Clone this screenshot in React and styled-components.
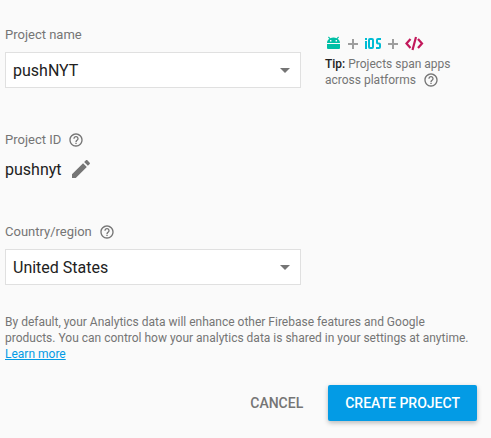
import React, { useState } from "react";
import styled, { createGlobalStyle } from "styled-components";

const GlobalStyle = createGlobalStyle`
  *, *::before, *::after { box-sizing: border-box; }
  body {
    margin: 0;
    background: #fafafa;
    color: #212121;
    font-family: Roboto, "Liberation Sans", sans-serif;
  }
`;

const Form = styled.form`
  display: flex;
  flex-direction: column;
  padding: 25px 14px 16px 5px;
`;

const TopRow = styled.div`
  display: grid;
  grid-template-columns: minmax(0, 296px) minmax(128px, 150px);
  column-gap: 24px;
`;

const Field = styled.div`
  display: flex;
  flex-direction: column;
  gap: 7px;
  max-width: 296px;
  margin-top: ${(p) => p.$space || 0}px;
`;

const LabelRow = styled.div`
  display: flex;
  align-items: center;
  gap: 7px;
  height: 20px;
`;

const Label = styled.label`
  font-size: 13px;
  line-height: 20px;
  color: #757575;
`;

const IconButton = styled.button`
  display: inline-flex;
  padding: 0;
  border: 0;
  background: none;
  color: #757575;
  cursor: pointer;
`;

const Box = styled.div`
  display: flex;
  align-items: center;
  height: 36px;
  border: 1px solid #e0e0e0;
  background: #fff;
  color: #757575;
`;

const NameInput = styled.input`
  flex: 1;
  min-width: 0;
  height: 100%;
  padding: 0 7px;
  border: 0;
  outline: 0;
  background: none;
  font: 16px Roboto, "Liberation Sans", sans-serif;
  color: #212121;
`;

const ArrowButton = styled(IconButton)`
  margin-right: 3px;
`;

const SelectBox = styled(Box)`
  display: grid;
  grid-template-columns: minmax(0, 1fr) 27px;

  select {
    grid-area: 1 / 1 / 2 / 3;
  }
  svg {
    grid-area: 1 / 2 / 2 / 3;
    pointer-events: none;
  }
`;

const RegionSelect = styled.select`
  appearance: none;
  width: 100%;
  height: 34px;
  padding: 0 32px 0 7px;
  border: 0;
  outline: 0;
  background: none;
  font: 16px Roboto, "Liberation Sans", sans-serif;
  color: #212121;
`;

const Tip = styled.aside`
  display: flex;
  flex-direction: column;
  gap: 5px;
  padding-top: 10px;
`;

const Platforms = styled.div`
  display: flex;
  align-items: center;
  height: 16px;
`;

const TipText = styled.p`
  margin: 0;
  font-size: 12px;
  line-height: 16px;
  color: #757575;

  b {
    font-weight: 500;
    color: #212121;
  }
  button {
    margin-left: 4px;
    vertical-align: bottom;
  }
`;

const ProjectId = styled.div`
  display: flex;
  align-items: flex-start;
  gap: 7px;
  height: 24px;
  font-size: 16px;
  line-height: 26px;
`;

const Notice = styled.p`
  margin: 29px 0 0;
  font-size: 12px;
  line-height: 16px;
  color: #757575;
`;

const Link = styled.a`
  color: #039be5;
  text-decoration: underline;
`;

const Actions = styled.div`
  display: flex;
  justify-content: flex-end;
  gap: 8px;
  margin-top: 23px;
`;

const Button = styled.button`
  height: 36px;
  padding: 0 17px;
  border: 0;
  border-radius: 2px;
  background: ${(p) => (p.$primary ? "#039be5" : "transparent")};
  box-shadow: ${(p) => (p.$primary ? "0 2px 5px rgba(0, 0, 0, 0.26)" : "none")};
  color: ${(p) => (p.$primary ? "#fff" : "#757575")};
  font: 500 14px Roboto, "Liberation Sans", sans-serif;
  white-space: nowrap;
  cursor: pointer;
`;

const HelpIcon = () => (
  <svg width="16" height="16" viewBox="0 0 24 24" fill="currentColor" aria-hidden="true">
    <path d="M11 18h2v-2h-2v2zm1-16C6.48 2 2 6.48 2 12s4.48 10 10 10 10-4.48 10-10S17.52 2 12 2zm0 18c-4.41 0-8-3.59-8-8s3.59-8 8-8 8 3.59 8 8-3.59 8-8 8zm0-14c-2.21 0-4 1.79-4 4h2c0-1.1.9-2 2-2s2 .9 2 2c0 2-3 1.75-3 5h2c0-2.25 3-2.5 3-5 0-2.21-1.79-4-4-4z" />
  </svg>
);

const Help = ({ label }) => (
  <IconButton type="button" aria-label={label}>
    <HelpIcon />
  </IconButton>
);

const EditIcon = () => (
  <svg width="24" height="24" viewBox="0 0 24 24" fill="currentColor" aria-hidden="true">
    <path d="M3 17.25V21h3.75L17.81 9.94l-3.75-3.75L3 17.25zM20.71 7.04c.39-.39.39-1.02 0-1.41l-2.34-2.34c-.39-.39-1.02-.39-1.41 0l-1.83 1.83 3.75 3.75 1.83-1.83z" />
  </svg>
);

const ArrowIcon = () => (
  <svg width="24" height="24" viewBox="0 0 24 24" fill="currentColor" aria-hidden="true">
    <path d="M7 10l5 5 5-5z" />
  </svg>
);

const AndroidIcon = () => (
  <svg width="17" height="16" viewBox="0 0 17 16" fill="#00bfa5" aria-hidden="true">
    <path
      fillRule="evenodd"
      d="M2 8C2 6 3 4.6 4.4 3.8L3 2.4l.8-.8 1.6 1.6C6.2 2.8 7.3 2.6 8.5 2.6s2.3.2 3.1.6l1.6-1.6.8.8-1.4 1.4C14 4.6 15 6 15 8zM5 5v1.4h1.4V5zM10.6 5v1.4H12V5z"
    />
    <path d="M2 9h13V13q0 1-1 1H3q-1 0-1-1z" />
  </svg>
);

const PlusIcon = () => (
  <svg width="22" height="16" viewBox="0 0 22 16" stroke="#9e9e9e" strokeWidth="2" aria-hidden="true">
    <path d="M6 9h10M11 4v10" />
  </svg>
);

const IosIcon = () => (
  <svg width="18" height="16" viewBox="0 0 18 16" fill="none" stroke="#00bcd4" strokeWidth="2" role="img" aria-label="iOS">
    <path d="M2 3v2M2 6v8" />
    <rect x="5" y="4" width="4" height="9" rx="1" />
    <path d="M17 4h-3q-1 0-1 1v2.5q0 1 1 1h1q1 0 1 1V12q0 1-1 1h-3" />
  </svg>
);

const CodeIcon = () => (
  <svg width="20" height="16" viewBox="0 0 20 16" fill="none" stroke="#c2185b" strokeWidth="2.2" aria-hidden="true">
    <path d="M6.5 4L2.5 8.5l4 4.5M14 4l4 4.5-4 4.5M12 2L8.5 15" />
  </svg>
);

export default function App() {
  const [name, setName] = useState("pushNYT");

  return (
    <>
      <GlobalStyle />
      <Form onSubmit={(e) => e.preventDefault()}>
        <TopRow>
          <Field>
            <LabelRow>
              <Label htmlFor="project-name">Project name</Label>
            </LabelRow>
            <Box>
              <NameInput id="project-name" value={name} onChange={(e) => setName(e.target.value)} />
              <ArrowButton type="button" aria-label="Show existing projects">
                <ArrowIcon />
              </ArrowButton>
            </Box>
          </Field>
          <Tip>
            <Platforms>
              <AndroidIcon />
              <PlusIcon />
              <IosIcon />
              <PlusIcon />
              <CodeIcon />
            </Platforms>
            <TipText>
              <b>Tip:</b> Projects span apps
              <br />
              across platforms <Help label="About projects" />
            </TipText>
          </Tip>
        </TopRow>

        <Field $space={42}>
          <LabelRow>
            <Label as="span">Project ID</Label>
            <Help label="About project ID" />
          </LabelRow>
          <ProjectId>
            pushnyt
            <IconButton type="button" aria-label="Edit project ID">
              <EditIcon />
            </IconButton>
          </ProjectId>
        </Field>

        <Field $space={41}>
          <LabelRow>
            <Label htmlFor="region">Country/region</Label>
            <Help label="About country/region" />
          </LabelRow>
          <SelectBox>
            <RegionSelect id="region" defaultValue="United States">
              <option>United States</option>
              <option>Canada</option>
              <option>United Kingdom</option>
            </RegionSelect>
            <ArrowIcon />
          </SelectBox>
        </Field>

        <Notice>
          By default, your Analytics data will enhance other Firebase features and Google
          products. You can control how your analytics data is shared in your settings at
          anytime. <Link href="#learn-more">Learn more</Link>
        </Notice>

        <Actions>
          <Button type="button">CANCEL</Button>
          <Button type="submit" $primary>
            CREATE PROJECT
          </Button>
        </Actions>
      </Form>
    </>
  );
}
